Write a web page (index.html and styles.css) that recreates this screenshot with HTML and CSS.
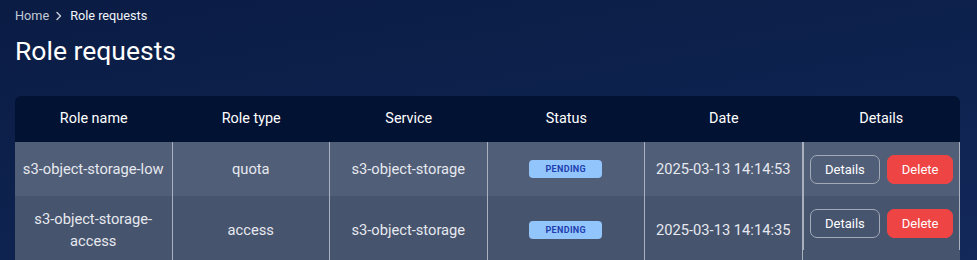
FILE: index.html
```html
<!DOCTYPE html>
<html lang="en">
<head>
<meta charset="utf-8">
<title>Role requests</title>
<link rel="stylesheet" href="styles.css">
</head>
<body>
<main class="page">
  <nav class="breadcrumb">
    <span class="crumb">Home</span>
    <svg class="chev" width="12" height="12" viewBox="0 0 12 12" aria-hidden="true"><path d="M4 2.5 L7.5 6 L4 9.5" fill="none" stroke="currentColor" stroke-width="1.5" stroke-linecap="round" stroke-linejoin="round"/></svg>
    <span class="crumb current">Role requests</span>
  </nav>
  <h1 class="title">Role requests</h1>
  <div class="table-wrap">
    <table class="roles">
      <thead>
        <tr>
          <th>Role name</th>
          <th>Role type</th>
          <th>Service</th>
          <th>Status</th>
          <th>Date</th>
          <th>Details</th>
        </tr>
      </thead>
      <tbody>
        <tr class="row-a">
          <td>s3-object-storage-low</td>
          <td>quota</td>
          <td>s3-object-storage</td>
          <td><span class="badge">PENDING</span></td>
          <td>2025-03-13 14:14:53</td>
          <td class="actions"><button class="btn btn-outline">Details</button><button class="btn btn-danger">Delete</button></td>
        </tr>
        <tr class="row-b">
          <td>s3-object-storage-access</td>
          <td>access</td>
          <td>s3-object-storage</td>
          <td><span class="badge">PENDING</span></td>
          <td>2025-03-13 14:14:35</td>
          <td class="actions"><button class="btn btn-outline">Details</button><button class="btn btn-danger">Delete</button></td>
        </tr>
      </tbody>
    </table>
  </div>
</main>
</body>
</html>
```
FILE: styles.css
```css
html, body {
  margin: 0;
  padding: 0;
}
body {
  min-height: 100vh;
  background: linear-gradient(170deg, #0a1c44 0%, #0e2350 60%, #13295a 100%);
  font-family: Roboto, "Liberation Sans", Arial, sans-serif;
  color: #ffffff;
}
.page {
  padding: 6px 17px 0 15px;
}
.breadcrumb {
  display: flex;
  align-items: center;
  height: 20px;
  font-size: 12.7px;
  line-height: 20px;
}
.crumb {
  color: #c3cad6;
}
.crumb.current {
  color: #f1f4f9;
  font-weight: 400;
}
.chev {
  color: #c3cad6;
  margin: 0 5px 0 4px;
}
.title {
  margin: 7px 0 0 0;
  font-size: 26.5px;
  line-height: 36px;
  font-weight: 400;
  color: #ffffff;
}
.table-wrap {
  margin-top: 27px;
  border-radius: 6px 6px 0 0;
  overflow: hidden;
}
.roles {
  width: 100%;
  table-layout: fixed;
  border-collapse: separate;
  border-spacing: 0;
  font-size: 14.7px;
  line-height: 22px;
}
.roles th {
  background: #021233;
  color: #ffffff;
  font-weight: 400;
  font-size: 14.4px;
  padding: 12px 6px;
  text-align: center;
}
.roles td {
  padding: 12px 6px;
  text-align: center;
  vertical-align: middle;
  color: #e6e9ef;
  border-right: 1px solid #aab1be;
}
.row-a {
  background: #515e78;
}
.row-b {
  background: #46546e;
}
.roles td.actions {
  display: flex;
  justify-content: center;
  align-items: center;
  gap: 7px;
  padding: 13px 0 12px 1px;
  border-left: 1px solid #aab1be;
  border-right: 1px solid #aab1be;
}
.badge {
  display: inline-block;
  vertical-align: top;
  margin-top: 2px;
  height: 18px;
  line-height: 18px;
  padding: 0 16px;
  border-radius: 4px;
  background: #93c5fd;
  color: #1e40af;
  font-size: 9px;
  font-weight: 700;
  letter-spacing: 0.35px;
}
.btn {
  height: 29px;
  padding: 0 14px;
  border-radius: 7px;
  font-family: Roboto, "Liberation Sans", Arial, sans-serif;
  font-size: 13px;
  font-weight: 400;
  line-height: 17px;
  color: #ffffff;
  cursor: pointer;
}
.btn-outline {
  background: transparent;
  border: 1px solid #a3aab7;
}
.btn-danger {
  background: #ef4444;
  border: 1px solid #ef4444;
}
```
